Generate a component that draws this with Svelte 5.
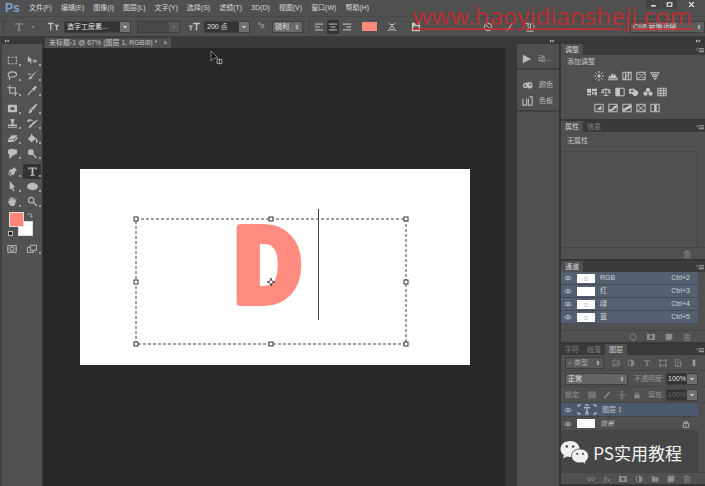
<script>
    const menus = ["文件(F)", "编辑(E)", "图像(I)", "图层(L)", "文字(Y)", "选择(S)", "滤镜(T)", "3D(D)", "视图(V)", "窗口(W)", "帮助(H)"];

    // Each icon sits on a 12x12 grid: f = filled path, s = stroked path
    const icons = {
        marquee: { s: "M1.5 3.5v-1h2M5 2.5h2M8.500 2.500h2v1M10.500 5v2M10.500 8.500v1h-2M7 9.500H5M3.500 9.500h-2v-1M1.500 7V5" },
        move: { f: "M1 1l5 5H4l1 3-1 .5L3 6.500 1 8z", s: "M6 6.500h5M8.500 4.500v4" },
        lasso: { s: "M3 8C0 6 1 2 6 2s6 4 2 5.500C6 8 4 7 3 8s1 2-1 3" },
        quick: { f: "M11 1L6 7 4.500 6zM4 6.500l2 1.500C5 10 3 10.500 1 10c1.500-.5 1.500-2.500 3-3.500z", s: "M1 4.500h3" },
        crop: { s: "M3 0v9h9M0 3h9v9" },
        dropper: { f: "M8 1.500c1.500-1.500 3.500.5 2 2L8.500 5l.5.5-1 1L5.500 4l1-1 .5.5z", s: "M6.500 5L2 9.500 1 11" },
        heal: { f: "M2 2h8a1 1 0 011 1v6a1 1 0 01-1 1H2a1 1 0 01-1-1V3a1 1 0 011-1zM4 4.500v3h4v-3z" },
        brush: { f: "M11.500.5c.5.5-3 5-5 7L4.500 5.500C7 3.500 10.500 0 11.500.5zM4 6l2 2c-.5 2.500-2.500 3.500-5 3 2-.5 1-3.500 3-5z" },
        stamp: { f: "M4 1h4v2L7 5v2h4v2H1V7h4V5L4 3zM1 10h10v1H1z" },
        history: { f: "M11.500 2c.5.5-3 4-5 6L5 6C7 4.500 10.500 1.500 11.500 2zM4.500 6.500L6 8c-.5 2-2.500 3-5 2.500 2-.5 1.500-3 3.500-4z", s: "M1 3.500c1-2 4-2 5 0M1 1.500v2h2" },
        eraser: { f: "M5 2.500h6.500L8 6.500H1.500zM1 7.200h6.500V9.800H1zM8.500 7l3-3.500v2.500l-3 3.500z" },
        bucket: { f: "M5 2l5 4-5 4-4-3.500zM10 6c2 1 2 5 .8 5S9.500 9 10 6z", s: "M5 5V1" },
        smudge: { f: "M1 4c0-3 3-3.500 5.500-3L11 2v4L6 8.500 4 11H2l1-3c-1-1-2-2-2-4z" },
        dodge: { f: "M1 4.500a3.200 3.200 0 116.400 0 3.200 3.200 0 01-6.400 0zM6 7.500l1-1 4 4-1 1z" },
        pen: { f: "M7.500 1L11 4.500l-2 1L8 9l-6 2 3-3.500-1-1L1 10l2-6 3.500-1z" },
        text: { f: "M1.500 1.500h9V4h-1l-.5-1.300H7V9.300l1.500.4v.8h-5v-.8L5 9.300V2.700H3L2.500 4h-1z" },
        arrow: { f: "M3 0l6 7H6.500l1.500 3.500-1.500.7L5 8 3 9.500z" },
        ellipse: { f: "M0 6a6 4 0 1112 0A6 4 0 010 6z" },
        hand: { f: "M2.500 3l1 2.500V1.500h1V5l.5-4h1v4l1-3.500h1L7.800 5.500 9.500 3h1L9 8c-.5 2-1 3-2 3H4.500C3 10 2 8 .5 6l1-.6 1.500 1L1.800 3.200z" },
        zoom: { f: "M6.500 7.500l1-1 4 4-1 1z", s: "M1.500 4.500a3 3 0 106 0 3 3 0 10-6 0" },
        mask: { s: "M1 2h10v8H1zM3.500 6a2.500 2.500 0 105 0 2.500 2.500 0 10-5 0" },
        screen: { s: "M4 1.500h7.500v6H4zM4 4H.500v6H8V7.500" },
        swap: { s: "M2 4h7v6M4 1.500L1.500 4 4 6.500M6.500 8L9 10.500 11.500 8" },
        orient: { f: "M0 2h6v1.500H3.700V10H2.300V3.500H0zM7 4h5v1.300h-1.800V10H8.800V5.300H7z" },
        size: { f: "M0 5h4v1.200H2.700V10H1.300V6.200H0zM4.500 2H12v1.500H9V10H7.500V3.500h-3z" },
        left: { s: "M1 2.500h10M1 6h6M1 9.500h10" },
        center: { s: "M1 2.500h10M3 6h6M1 9.500h10" },
        right: { s: "M1 2.500h10M5 6h6M1 9.500h10" },
        warp: { s: "M2 1c1 3 7 3 8 0M6 4L3 8.500M6 4l3 4.500M1 10.500c3-2 7-2 10 0" },
        palette: { f: "M1 1h4v2h6v8H1zM3 5v4h6V5z", s: "M7 1.500h4" },
        cancel: { s: "M1.500 6a4.500 4.500 0 109 0 4.500 4.500 0 10-9 0M3 3l6 6" },
        check: { s: "M1.500 7L4 10l6.500-9" },
        three: { s: "M1 2h3.500L3 5c3 0 2 4-2 3.500M6.500 2v7c6 0 6-7 0-7M2 11h8" },
        play: { f: "M1 1l10 5-10 5z" },
        color: { f: "M6 3c3-2 6 0 5.500 3.500C11 10 7 10 6 8c-2 2-5 1-5-2s3-3.500 5-3zM2.500 5v2h2V5zM8 4v2h2V4z" },
        swatches: { s: "M1 3v7h4V3M7 3v7h4V1H8" },
        eye: { s: "M1 6.500c2-4 8-4 10 0-2 3-8 3-10 0M5 6.500a1 1 0 102 0 1 1 0 10-2 0" },
        sun: { f: "M4 6a2 2 0 114 0 2 2 0 01-4 0z", s: "M6 0v2.500M6 9.500V12M0 6h2.500M9.500 6H12M1.800 1.800l1.700 1.700M8.500 8.500l1.700 1.700M10.200 1.800L8.500 3.500M3.500 8.500l-1.700 1.700" },
        levels: { f: "M0 9l2-4 1 2 2-5 2 4 1-3 2 4 2 2zM0 10h12v1H0z" },
        curves: { s: "M1 1.500h10v9H1zM1 10c5 0 4-8 10-8M4.300 1.500v9M7.700 1.500v9" },
        exposure: { s: "M1 1.500h10v9H1zM1 10.500l10-9M3 4h2.500M7 8h3" },
        vibrance: { s: "M1 2h10L6 10.500zM4 4h4L6 7.500z" },
        hue: { f: "M0 2h5v5H0zM6 2h6v3H6zM6 6h2v3H6zM9 6h3v4H9zM0 8h5v2H0z" },
        balance: { s: "M2 3h8M6 1v9M3 10h6M2 3L.500 7h3zM10 3L8.500 7h3z" },
        bw: { f: "M1 1.500h5v9H1z", s: "M1 1.500h10v9H1z" },
        photo: { f: "M0 2h7v2h1a3.500 3.500 0 11-4 4H0zM2 4v2h2.500l1-1V4z" },
        mixer: { f: "M3.500 3.500a2.500 2.500 0 115 0 2.500 2.500 0 01-5 0zM.500 8a2.500 2.500 0 115 0 2.500 2.500 0 01-5 0zM6.500 8a2.500 2.500 0 115 0 2.500 2.500 0 01-5 0z" },
        lookup: { s: "M1 1.500h10v9H1zM1 4.500h10M1 7.500h10M4.500 1.500v9M8 1.500v9" },
        invert: { f: "M3 8l6-5v5z", s: "M1 1.500h10v9H1z" },
        poster: { f: "M1 10V8l4-1 2-3 4-2v3L8 7 6 9z", s: "M1 1.500h10v9H1z" },
        threshold: { f: "M1 10.500v-3l10-6v4z", s: "M1 1.500h10v9H1z" },
        selective: { s: "M1 1.500h10v9H1zM1 1.500l5 5 5-5M1 10.500l5-4 5 4" },
        gradient: { f: "M5 2h3v8H5z", s: "M1 1.500h10v9H1z" },
        trash: { s: "M1.500 3h9M4.500 3V1.500h3V3M2.500 3v8h7V3M5 5v4M7 5v4" },
        ring: { s: "M1.500 6a4.500 4.500 0 109 0 4.500 4.500 0 10-9 0" },
        maskbtn: { f: "M0 1.500h12v9H0zM3.500 6a2.500 2.500 0 105 0 2.500 2.500 0 10-5 0z" },
        page: { f: "M1 1h10v7l-3 3H1z" },
        image: { s: "M1 2h10v8H1zM2 9l3-3 2 2 2-3 2 4" },
        adjust: { f: "M6 1a5 5 0 010 10z", s: "M1.500 6a4.500 4.500 0 109 0 4.500 4.500 0 10-9 0" },
        shape: { s: "M2 2h8v8H2zM.500 1h2v2h-2zM9.500 1h2v2h-2zM.500 9h2v2h-2zM9.500 9h2v2h-2z" },
        smart: { s: "M2 1h6l2 2v8H2zM5 5h5v6H5z" },
        cross: { s: "M6 0v12M0 6h12M4 2l2-2 2 2M4 10l2 2 2-2" },
        lock: { f: "M2 5h8v6H2z", s: "M4 5V2.500h4V5" },
        lockline: { s: "M2 5h8v6H2zM4 5V2.500h4V5M6 7v2" },
        link: { s: "M5 4H2.500a2 2 0 000 4H5M7 4h2.500a2 2 0 010 4H7M4 6h4" },
        fx: { s: "M5 1.500C3.500 1 3.500 3 3 10.500H1M1 5h4M6 5l5 5.500M11 5l-5 5.500" },
        folder: { f: "M1 2h4l1 1.500h5V10H1z" },
        panelmenu: { f: "M0 4h3L1.500 6.500zM4 3h8v1.200H4zM4 5.500h8v1.200H4zM4 8h8v1.200H4z" },
        collapse: { f: "M0 3l4 3-4 3zM5 3l4 3-4 3z" },
        down: { f: "M2 4h8l-4 4.500z" },
        updown: { f: "M3 5l3-3.500L9 5zM3 7h6l-3 3.500z" },
        toggle: { f: "M4 1h4v10H4z" },
    };

    const toolGroups = [
        [["marquee", "move"], ["lasso", "quick"], ["crop", "dropper"]],
        [["heal", "brush"], ["stamp", "history"], ["eraser", "bucket"], ["smudge", "dodge"]],
        [["pen", "text"], ["arrow", "ellipse"], ["hand", "zoom"]],
    ];

    const adjustments = [
        ["sun", "levels", "curves", "exposure", "vibrance"],
        ["hue", "balance", "bw", "photo", "mixer", "lookup"],
        ["invert", "poster", "threshold", "selective", "gradient"],
    ];

    const channels = [
        { name: "RGB", key: "Ctrl+2", mark: "D" },
        { name: "红", key: "Ctrl+3", mark: "" },
        { name: "绿", key: "Ctrl+4", mark: "D" },
        { name: "蓝", key: "Ctrl+5", mark: "D" },
    ];

    const handles = [[56, 50], [191, 50], [326, 50], [56, 113], [326, 113], [56, 175], [191, 175], [326, 175]];

    let tool = $state("text");
    let align = $state("center");
    let layer = $state("图层 1");
</script>

{#snippet icon(name, kind = "")}
    <svg class="icon {kind}" viewBox="0 0 12 12" aria-hidden="true">
        {#if icons[name].f}<path d={icons[name].f} fill="currentColor" fill-rule="evenodd" />{/if}
        {#if icons[name].s}<path d={icons[name].s} fill="none" stroke="currentColor" stroke-width="1.2" />{/if}
    </svg>
{/snippet}

{#snippet dropdown(label, value, kind, arrow = "down")}
    <span class="dropdown {kind}">
        <select aria-label={label}><option>{value}</option></select>
        <span class="chevron">{@render icon(arrow, "tiny")}</span>
    </span>
{/snippet}

{#snippet tabs(names, active)}
    <div class="tabs">
        {#each names as name}
            <button class="tab" class:active={name === active}>{name}</button>
        {/each}
        <button class="panel-menu" aria-label="面板菜单">{@render icon("panelmenu", "small")}</button>
    </div>
{/snippet}

<div class="app">
    <header class="menubar">
        <span class="logo">Ps</span>
        <nav>
            {#each menus as menu}
                <button>{menu}</button>
            {/each}
        </nav>
        <div class="window-buttons">
            <button aria-label="最小化"><svg class="icon" viewBox="0 0 12 12"><path d="M2 7h8v2.500H2z" fill="currentColor" /></svg></button>
            <button aria-label="最大化"><svg class="icon" viewBox="0 0 12 12"><path d="M2 3h8v6H2z" fill="none" stroke="currentColor" stroke-width="2" /></svg></button>
            <button class="close" aria-label="关闭"><svg class="icon" viewBox="0 0 12 12"><path d="M2 2l8 8M10 2l-8 8" stroke="currentColor" stroke-width="2.200" /></svg></button>
        </div>
    </header>

    <div class="options">
        <span class="grip"></span>
        <button class="preset" aria-label="工具预设">{@render icon("text")}{@render icon("down", "tiny")}</button>
        <button aria-label="切换文本取向">{@render icon("orient", "large")}</button>
        {@render dropdown("字体", "造字工房素...", "family")}
        {@render dropdown("字体样式", "", "weight off")}
        <span class="size-icon">{@render icon("size", "large")}</span>
        {@render dropdown("字号", "200 点", "size")}
        <span class="aa"><sup>a</sup>a</span>
        {@render dropdown("消除锯齿", "锐利", "smooth", "updown")}
        <span class="rule"></span>
        <div class="aligns">
            {#each ["left", "center", "right"] as side}
                <button class:active={align === side} aria-label={side} onclick={() => (align = side)}>{@render icon(side)}</button>
            {/each}
        </div>
        <button class="text-color" aria-label="文本颜色"></button>
        <button class="warp" aria-label="变形文字">{@render icon("warp")}</button>
        <button aria-label="字符面板">{@render icon("palette")}</button>
        <div class="commit">
            <button aria-label="取消">{@render icon("cancel")}</button>
            <button aria-label="提交">{@render icon("check")}</button>
            <button aria-label="3D">{@render icon("three")}</button>
        </div>
        {@render dropdown("工作区", "CS6 新增功能", "switcher", "updown")}
    </div>

    <div class="body">
        <aside class="toolbox">
            <div class="strip">{@render icon("collapse", "tiny")}</div>
            <div class="tools">
                {#each toolGroups as group}
                    <div class="tool-group">
                        {#each group as row}
                            {#each row as name}
                                <button class:active={tool === name} aria-label={name} onclick={() => (tool = name)}>{@render icon(name, "large")}</button>
                            {/each}
                        {/each}
                    </div>
                {/each}
                <div class="colors">
                    <span class="bg"></span>
                    <span class="fg"></span>
                    <span class="swap">{@render icon("swap", "tiny")}</span>
                    <span class="reset"></span>
                </div>
                <div class="tool-group plain">
                    <button aria-label="快速蒙版">{@render icon("mask")}</button>
                    <button aria-label="屏幕模式">{@render icon("screen")}</button>
                </div>
            </div>
        </aside>

        <main class="workspace">
            <div class="doc-tabs">
                <button>未标题-1 @ 67% (图层 1, RGB/8) * <span>×</span></button>
            </div>
            <div class="stage">
                <div class="canvas-area">
                    <svg class="document" viewBox="0 0 390 196">
                        <rect width="390" height="196" fill="#fff" />
                        <text class="artwork" x="154" y="133">D</text>
                        <rect class="bounds" x="56" y="50" width="270" height="125" />
                        {#each handles as [x, y]}
                            <rect class="handle" x={x - 2} y={y - 2} width="4" height="4" />
                        {/each}
                        <path d="M191 109l1 3 3 1-3 1-1 3-1-3-3-1 3-1z" fill="#fff" stroke="#333" stroke-width=".8" />
                        <path d="M238.500 40v111" stroke="#444" />
                    </svg>
                </div>
                <div class="scroll"></div>
            </div>
            <svg class="cursor" viewBox="0 0 14 16" aria-hidden="true">
                <path d="M1 1v10l3-3h4z" fill="#111" stroke="#999" stroke-width=".8" />
                <path d="M7 9.500h5v4H7zM9.500 8.500v6" fill="none" stroke="#999" />
            </svg>
        </main>

        <aside class="dock">
            <div class="strip end">{@render icon("collapse", "tiny")}</div>
            <div class="dock-group">
                <button>{@render icon("play")}<span>动...</span></button>
            </div>
            <div class="dock-group">
                <button>{@render icon("color", "large")}<span>颜色</span></button>
                <button>{@render icon("swatches", "large")}<span>色板</span></button>
            </div>
        </aside>

        <aside class="panels">
            <div class="strip end">{@render icon("collapse", "tiny")}</div>

            <section>
                {@render tabs(["调整"], "调整")}
                <div class="adjust">
                    <p>添加调整</p>
                    {#each adjustments as row}
                        <div class="adjust-row">
                            {#each row as name}
                                <button aria-label={name}>{@render icon(name)}</button>
                            {/each}
                        </div>
                    {/each}
                </div>
            </section>

            <section>
                {@render tabs(["属性", "信息"], "属性")}
                <p class="no-props">无属性</p>
                <div class="props"></div>
                <div class="footer">{@render icon("trash", "small")}</div>
            </section>

            <section>
                {@render tabs(["通道"], "通道")}
                <div class="channels">
                    {#each channels as channel}
                        <button class="channel">
                            {@render icon("eye", "small")}
                            <span class="thumb">{channel.mark}</span>
                            <span class="name">{channel.name}</span>
                            <span>{channel.key}</span>
                        </button>
                    {/each}
                </div>
                <div class="footer spread">
                    {@render icon("ring", "small")}
                    {@render icon("maskbtn", "small")}
                    {@render icon("page", "small")}
                    {@render icon("trash", "small")}
                </div>
            </section>

            <section class="layers">
                {@render tabs(["字符", "段落", "图层"], "图层")}
                <div class="layer-row">
                    {@render dropdown("筛选", "⌕ 类型", "filter", "updown")}
                    <div class="filters">
                        {@render icon("image", "small")}
                        {@render icon("adjust", "small")}
                        {@render icon("text", "small")}
                        {@render icon("shape", "small")}
                        {@render icon("smart", "small")}
                    </div>
                    {@render icon("toggle", "small")}
                </div>
                <div class="layer-row">
                    {@render dropdown("混合模式", "正常", "blend", "updown")}
                    <span class="label">不透明度:</span>
                    {@render dropdown("不透明度", "100%", "percent")}
                </div>
                <div class="layer-row">
                    <span>锁定:</span>
                    <div class="locks">
                        {@render icon("lookup", "small")}
                        {@render icon("brush", "small")}
                        {@render icon("cross", "small")}
                        {@render icon("lock", "small")}
                    </div>
                    <span class="label">填充:</span>
                    {@render dropdown("填充", "100%", "percent dim")}
                </div>
                <div class="layer-list">
                    <button class="layer" class:selected={layer === "图层 1"} onclick={() => (layer = "图层 1")}>
                        {@render icon("eye", "small")}
                        <span class="type-thumb">
                            <svg viewBox="0 0 20 11" aria-hidden="true">
                                <path d="M1 3V1h3M8 1h4M16 1h3v2M19 8v2h-3M12 10H8M4 10H1V8" fill="none" stroke="#ccc" />
                            </svg>
                            {@render icon("text", "small")}
                        </span>
                        <span class="name">图层 1</span>
                    </button>
                    <button class="layer" class:selected={layer === "背景"} onclick={() => (layer = "背景")}>
                        {@render icon("eye", "small")}
                        <span class="thumb"></span>
                        <em class="name">背景</em>
                        {@render icon("lockline", "small")}
                    </button>
                </div>
                <div class="footer spread wide">
                    {@render icon("link", "small")}
                    {@render icon("fx", "small")}
                    {@render icon("maskbtn", "small")}
                    {@render icon("adjust", "small")}
                    {@render icon("folder", "small")}
                    {@render icon("page", "small")}
                    {@render icon("trash", "small")}
                </div>
            </section>
        </aside>
    </div>

    <a class="site" href="http://www.haoyidiansheji.com">www.haoyidiansheji.com</a>

    <div class="badge">
        <svg viewBox="0 0 30 26" aria-hidden="true">
            <path d="M10 1C4.500 1 .500 4.600.500 9c0 2.600 1.400 4.800 3.500 6.200L3 18.500l3.800-2c1 .3 2 .5 3.200.5 5.500 0 9.500-3.500 9.500-8S15.500 1 10 1z" fill="#f0f0f0" />
            <circle cx="6.800" cy="6.500" r="1.300" fill="#444" />
            <circle cx="13.200" cy="6.500" r="1.300" fill="#444" />
            <path d="M20 9c-5 0-8.500 3.200-8.500 7s3.500 7 8.500 7c1 0 2-.2 2.800-.4l3.400 1.900-.8-3c2-1.300 3.100-3.300 3.100-5.500 0-3.800-3.500-7-8.500-7z" fill="#f0f0f0" stroke="#444" stroke-width=".8" />
            <circle cx="17.300" cy="13.800" r="1.100" fill="#444" />
            <circle cx="23" cy="13.800" r="1.100" fill="#444" />
        </svg>
        <span>PS实用教程</span>
    </div>
</div>

<style>
    :global(body) {
        background: #282828;
    }

    .app {
        position: relative;
        display: flex;
        flex-direction: column;
        min-height: 100vh;
        overflow: hidden;
        background: #505050;
        color: #c4c4c4;
        font-family: "Liberation Sans", "Noto Sans CJK SC", sans-serif;
        font-size: 7px;
        line-height: 10px;
    }

    .app *,
    .app {
        box-sizing: border-box;
    }

    button,
    select {
        margin: 0;
        padding: 0;
        border: none;
        background: none;
        color: inherit;
        font: inherit;
    }

    button {
        display: flex;
        align-items: center;
        justify-content: center;
        white-space: nowrap;
    }

    p {
        margin: 0;
    }

    .icon {
        display: block;
        flex-shrink: 0;
        width: 10px;
        height: 10px;
    }

    .icon.large {
        width: 11px;
        height: 11px;
    }

    .icon.small {
        width: 8px;
        height: 8px;
    }

    .icon.tiny {
        width: 6px;
        height: 6px;
    }

    /* Menu bar */
    .menubar {
        display: flex;
        align-items: center;
        height: 16px;
        padding-left: 5px;
    }

    .logo {
        width: 24px;
        color: #7da3cf;
        font-size: 12px;
        font-weight: bold;
    }

    nav {
        display: flex;
        gap: 9px;
        color: #d8d8d8;
    }

    .window-buttons {
        display: flex;
        gap: 1px;
        align-self: flex-start;
        margin-left: auto;
        color: #f0f0f0;
    }

    .window-buttons button {
        width: 15px;
        height: 9px;
        background: #444;
    }

    .window-buttons .icon {
        width: 7px;
        height: 7px;
    }

    .window-buttons .close {
        width: 27px;
        background: none;
    }

    /* Options bar */
    .options {
        display: flex;
        align-items: center;
        height: 21px;
        border-top: 1px solid #484848;
        border-bottom: 1px solid #3c3c3c;
    }

    .grip {
        width: 2px;
        height: 14px;
        margin: 0 9px 0 3px;
        border-left: 1px dotted #333;
    }

    .preset {
        gap: 6px;
        margin-right: 12px;
        color: #8a8a8a;
    }

    .dropdown {
        display: flex;
        height: 12px;
        background: #343434;
        border: 1px solid #3e3e3e;
    }

    .dropdown select {
        flex: 1;
        min-width: 0;
        padding-left: 2px;
        appearance: none;
        color: #e4e4e4;
    }

    .chevron {
        display: flex;
        align-items: center;
        justify-content: center;
        width: 10px;
        background: #707070;
        color: #ddd;
    }

    .family {
        width: 67px;
        margin-left: 5px;
    }

    .weight {
        width: 43px;
        margin: 0 9px 0 6px;
    }

    .off {
        background: #484848;
    }

    .off .chevron {
        background: #585858;
        color: #777;
    }

    .size {
        width: 46px;
        margin-left: 4px;
    }

    .aa {
        width: 22px;
        text-align: center;
        color: #aaa;
    }

    .aa sup {
        font-size: 5px;
        line-height: 5px;
    }

    .smooth {
        width: 31px;
        background: #6a6a6a;
    }

    .smooth .chevron {
        background: none;
    }

    .rule {
        width: 1px;
        height: 15px;
        margin-left: 6px;
        background: #404040;
    }

    .aligns {
        display: flex;
        gap: 2px;
        margin: 0 9px 0 3px;
    }

    .aligns button {
        width: 12px;
        height: 14px;
    }

    .aligns .active {
        background: #333;
    }

    .text-color {
        width: 15px;
        height: 9px;
        background: #ff8a7d;
    }

    .warp {
        margin: 0 14px 0 10px;
    }

    .commit {
        display: flex;
        gap: 11px;
        margin-left: 62px;
    }

    .switcher {
        width: 75px;
        margin-left: auto;
        background: #5c5c5c;
    }

    .switcher .chevron {
        background: none;
    }

    /* Columns under the bars */
    .body {
        display: flex;
        flex: 1;
    }

    .strip {
        display: flex;
        align-items: center;
        height: 7px;
        padding: 0 3px;
        background: #383838;
    }

    .strip.end {
        justify-content: flex-end;
    }

    .toolbox {
        width: 43px;
        border-right: 1px solid #363636;
        border-left: 2px solid #404040;
    }

    .tools {
        padding-top: 9px;
        background: #525252;
    }

    .tool-group {
        display: grid;
        grid-template-columns: 18px 18px;
        justify-content: space-around;
        grid-auto-rows: 15px;
        margin-bottom: 3px;
    }

    .tool-group button {
        position: relative;
        color: #bcbcbc;
    }

    /* Corner mark for tools with a fly-out */
    .tool-group button::after {
        content: "";
        position: absolute;
        right: 0;
        bottom: 2px;
        width: 2px;
        height: 2px;
        background: #a0a0a0;
    }

    .plain button:first-child::after {
        display: none;
    }

    .tool-group .active {
        background: #323232;
    }

    .colors {
        position: relative;
        height: 29px;
    }

    .colors span {
        position: absolute;
    }

    .fg,
    .bg {
        width: 15px;
        height: 15px;
        border: 1px solid #ddd;
    }

    .fg {
        top: 0;
        left: 7px;
        background: #ff8579;
    }

    .bg {
        top: 9px;
        left: 16px;
        background: #fff;
    }

    .swap {
        top: 0;
        left: 25px;
    }

    .reset {
        top: 19px;
        left: 6px;
        width: 5px;
        height: 5px;
        background: #222;
        border: 1px solid #bbb;
    }

    /* Document window */
    .workspace {
        position: relative;
        display: flex;
        flex: 1;
        flex-direction: column;
        min-width: 0;
    }

    .doc-tabs {
        display: flex;
        height: 11px;
        padding: 1px 2px 0;
        background: #3a3a3a;
    }

    .doc-tabs button {
        gap: 4px;
        padding: 0 4px;
        background: #515151;
        white-space: pre;
    }

    .stage {
        display: flex;
        flex: 1;
    }

    .canvas-area {
        display: flex;
        flex: 1;
        align-items: center;
        justify-content: center;
        padding: 0 35px 0 37px;
        background: #282828;
    }

    .document {
        display: block;
        width: 100%;
    }

    /* The stroke rounds the corners of the heavy letter */
    .artwork {
        fill: #ff8c80;
        stroke: #ff8c80;
        stroke-width: 8px;
        stroke-linejoin: round;
        font-family: Roboto, sans-serif;
        font-size: 104px;
        font-weight: 700;
    }

    .bounds {
        fill: none;
        stroke: #444;
        stroke-dasharray: 3 2;
    }

    .handle {
        fill: #fff;
        stroke: #333;
    }

    .scroll {
        width: 12px;
        background: #383838;
    }

    .cursor {
        position: absolute;
        top: 13px;
        left: 167px;
        width: 14px;
        height: 16px;
    }

    /* Collapsed dock */
    .dock {
        width: 44px;
        border-right: 2px solid #363636;
        background: #505050;
    }

    .dock-group {
        padding: 7px 0 1px 5px;
        border-bottom: 2px solid #404040;
    }

    .dock-group button {
        gap: 6px;
        height: 16px;
        color: #bbb;
    }

    /* Panels */
    .panels {
        display: flex;
        flex-direction: column;
        width: 144px;
        background: #505050;
    }

    section {
        border-bottom: 2px solid #363636;
    }

    .tabs {
        display: flex;
        height: 11px;
        background: #3a3a3a;
        color: #808080;
    }

    .tab {
        padding: 0 4px;
    }

    .tab.active {
        background: #505050;
        color: #d0d0d0;
    }

    .panel-menu {
        margin: 0 1px 0 auto;
        color: #aaa;
    }

    .adjust {
        height: 64px;
        padding: 2px 6px;
    }

    .adjust p {
        margin-bottom: 1px;
    }

    .adjust-row {
        display: flex;
        gap: 4px;
        justify-content: center;
        height: 16px;
        padding-right: 12px;
    }

    .no-props {
        padding: 4px 6px 5px;
    }

    .props {
        height: 96px;
        margin-right: 7px;
        border-top: 1px solid #464646;
        border-right: 1px solid #424242;
    }

    .footer {
        display: flex;
        align-items: center;
        justify-content: flex-end;
        height: 12px;
        padding-right: 14px;
        border-top: 1px solid #444;
        color: #8c8c8c;
    }

    .spread {
        gap: 10px;
    }

    .channels {
        padding-right: 7px;
        padding-bottom: 6px;
    }

    .channel,
    .layer {
        gap: 5px;
        width: 100%;
        padding: 0 8px 0 3px;
        border-bottom: 1px solid #434b55;
        text-align: left;
    }

    .channel {
        height: 13px;
        background: #546070;
        color: #d0d4d8;
    }

    .thumb {
        width: 18px;
        height: 9px;
        background: #fff;
        color: #aaa;
        font-size: 5px;
        text-align: center;
    }

    .name {
        flex: 1;
    }

    .layers {
        display: flex;
        flex: 1;
        flex-direction: column;
    }

    .layer-row {
        display: flex;
        align-items: center;
        height: 16px;
        padding: 0 7px 0 4px;
        border-bottom: 1px solid #464646;
        color: #999;
    }

    .filter {
        width: 39px;
        background: #585858;
    }

    .filter select {
        color: #aaa;
    }

    .filter .chevron,
    .blend .chevron {
        background: none;
    }

    .filters,
    .locks {
        display: flex;
        flex: 1;
        justify-content: space-around;
        padding: 0 4px;
        color: #888;
    }

    .blend {
        width: 63px;
        background: #666;
    }

    .label {
        margin: 0 2px 0 auto;
    }

    .percent {
        width: 32px;
    }

    .percent select {
        padding-left: 1px;
    }

    .dim select {
        color: #666;
    }

    .layer-list {
        flex: 1;
        margin-right: 7px;
        background: #464646;
    }

    .layer {
        height: 14px;
        background: #505050;
        border-color: #444;
    }

    .layer.selected {
        background: #4c5a70;
    }

    .type-thumb {
        display: grid;
        place-items: center;
        width: 20px;
        height: 11px;
    }

    .type-thumb > :global(*) {
        grid-area: 1 / 1;
    }

    .wide {
        gap: 8px;
    }

    /* Overlays */
    .site {
        position: absolute;
        top: 0;
        right: 13px;
        color: #d02a2e;
        font-family: "Noto Sans", sans-serif;
        font-size: 24px;
        line-height: 32px;
        text-underline-offset: 3px;
        opacity: 0.8;
    }

    .badge {
        position: absolute;
        right: 23px;
        bottom: 20px;
        display: flex;
        gap: 3px;
        align-items: center;
        color: #f4f4f4;
        font-family: "Noto Sans CJK SC", sans-serif;
        font-size: 17px;
        line-height: 26px;
        pointer-events: none;
    }

    .badge svg {
        width: 30px;
        height: 26px;
    }
</style>
